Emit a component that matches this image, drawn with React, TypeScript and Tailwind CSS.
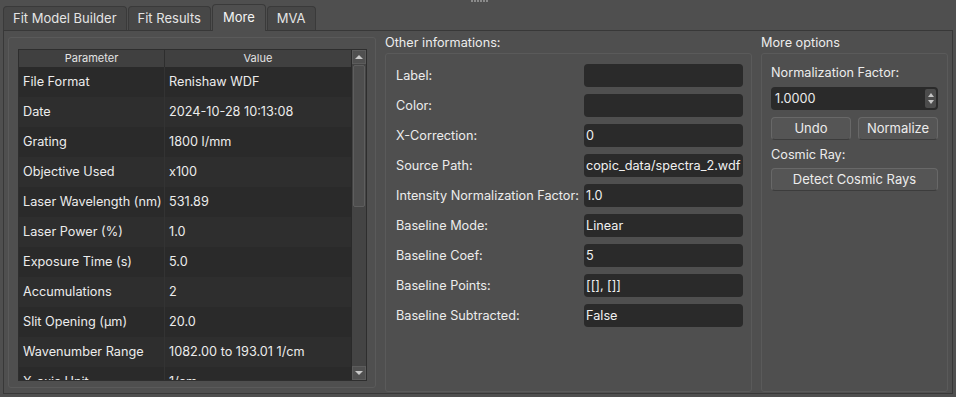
import React from "react";

const rows: [string, string][] = [
  ["File Format", "Renishaw WDF"],
  ["Date", "2024-10-28 10:13:08"],
  ["Grating", "1800 l/mm"],
  ["Objective Used", "x100"],
  ["Laser Wavelength (nm)", "531.89"],
  ["Laser Power (%)", "1.0"],
  ["Exposure Time (s)", "5.0"],
  ["Accumulations", "2"],
  ["Slit Opening (µm)", "20.0"],
  ["Wavenumber Range", "1082.00 to 193.01 1/cm"],
  ["X-axis Unit", "1/cm"],
];

const infos: [string, string][] = [
  ["Label:", ""],
  ["Color:", ""],
  ["X-Correction:", "0"],
  ["Source Path:", "copic_data/spectra_2.wdf"],
  ["Intensity Normalization Factor:", "1.0"],
  ["Baseline Mode:", "Linear"],
  ["Baseline Coef:", "5"],
  ["Baseline Points:", "[[], []]"],
  ["Baseline Subtracted:", "False"],
];

const tabs = ["Fit Model Builder", "Fit Results", "More", "MVA"];

function Button({ children, className = "" }: { children: React.ReactNode; className?: string }) {
  return (
    <div
      className={`flex h-[23px] items-center justify-center rounded-[4px] border border-[#686868] border-b-[#3c3c3c] bg-[#555555] text-[13px] text-[#ececec] ${className}`}
    >
      {children}
    </div>
  );
}

export default function App() {
  return (
    <div
      className="relative h-[397px] w-[956px] overflow-hidden bg-[#4f4f4f] text-[12.7px] text-[#ececec]"
      style={{ fontFamily: "Inter, 'Noto Sans', sans-serif" }}
    >
      {/* splitter handle */}
      <div className="absolute left-[471px] top-0 flex gap-[1px]">
        {[0, 1, 2, 3, 4, 5].map((i) => (
          <div key={i} className="h-[2px] w-[2px] bg-[#8a8a8a]" />
        ))}
      </div>

      {/* tab bar */}
      <div className="flex h-[30px] items-end pl-[3px] pt-[4px] text-[13px]">
        {tabs.map((t) => {
          const active = t === "More";
          return (
            <div
              key={t}
              className={
                active
                  ? "relative z-10 -mb-[1px] mr-[1px] flex h-[27px] items-center rounded-t-[4px] border border-b-0 border-[#3a3a3a] bg-[#4f4f4f] px-[10px] pb-[1px] text-[#f4f4f4]"
                  : "mr-[1px] flex h-[24px] items-center rounded-t-[4px] border border-b-0 border-[#3a3a3a] bg-[#474747] px-[9px] pt-[1px] text-[#e4e4e4]"
              }
            >
              {t}
            </div>
          );
        })}
      </div>

      {/* tab pane */}
      <div className="mx-[3px] flex h-[364px] border border-[#383838] px-[4px] pt-[6px]">
        {/* left group: metadata table */}
        <div className="h-[351px] w-[368px] rounded-[3px] border border-[#5a5a5a] px-[9px] pt-[11px]">
          <div className="flex h-[332px] w-[349px] border border-[#2e2e2e] bg-[#2b2b2b]">
            <div className="flex-1 overflow-hidden">
              <div className="flex h-[17px] bg-[#404040] text-[11px] text-[#e4e4e4]">
                <div className="flex w-[146px] items-center justify-center border-r border-[#2e2e2e]">Parameter</div>
                <div className="flex flex-1 items-center justify-center">Value</div>
              </div>
              {rows.map(([k, v], i) => (
                <div key={k} className={`flex h-[30px] items-center ${i % 2 ? "bg-[#2e2e2e]" : "bg-[#2a2a2a]"}`}>
                  <div className="flex h-full w-[146px] items-center whitespace-nowrap border-r border-[#333333] pl-[4px]">
                    {k}
                  </div>
                  <div className="whitespace-nowrap pl-[4px]">{v}</div>
                </div>
              ))}
            </div>
            {/* scrollbar */}
            <div className="flex w-[15px] flex-col border-l border-[#2a2a2a] bg-[#444444]">
              <div className="flex h-[14px] items-center justify-center border border-[#5c5c5c] bg-[#505050]">
                <div className="h-0 w-0 border-x-[4px] border-b-[4px] border-x-transparent border-b-[#c8c8c8]" />
              </div>
              <div className="mx-[1px] mt-[1px] h-[142px] rounded-[2px] border border-[#5e5e5e] bg-[#4e4e4e]" />
              <div className="flex-1" />
              <div className="flex h-[14px] items-center justify-center border border-[#5c5c5c] bg-[#505050]">
                <div className="h-0 w-0 border-x-[4px] border-t-[4px] border-x-transparent border-t-[#c8c8c8]" />
              </div>
            </div>
          </div>
        </div>

        {/* middle group */}
        <div className="ml-[9px] flex w-[368px] flex-col">
          <div className="h-[16px] leading-[12px]">Other informations:</div>
          <div className="h-[339px] rounded-[3px] border border-[#5a5a5a] pl-[10px] pt-[10px]">
            <div className="flex flex-col gap-[7px]">
              {infos.map(([k, v]) => (
                <div key={k} className="flex h-[23px] items-center">
                  <div className="w-[188px] whitespace-nowrap">{k}</div>
                  <div className="flex h-[23px] w-[159px] items-center justify-end overflow-hidden whitespace-nowrap rounded-[4px] bg-[#2a2a2a] px-[2px] text-[#f0f0f0]">
                    <span className="flex-none">{v}</span>
                    <span className="flex-1" />
                  </div>
                </div>
              ))}
            </div>
          </div>
        </div>

        {/* right group */}
        <div className="ml-[9px] flex w-[187px] flex-col">
          <div className="h-[16px] leading-[12px]">More options</div>
          <div className="h-[339px] rounded-[3px] border border-[#5a5a5a] px-[9px] pt-[11px]">
            <div className="leading-[16px]">Normalization Factor:</div>
            <div className="mt-[6px] flex h-[23px] items-center rounded-[4px] bg-[#2a2a2a] pl-[4px]">
              <span className="flex-1">1.0000</span>
              <div className="mr-[2px] flex h-[19px] w-[11px] flex-col items-center justify-center gap-[3px] rounded-[2px] bg-[#4c4c4c]">
                <div className="h-0 w-0 border-x-[3.5px] border-b-[4px] border-x-transparent border-b-[#c4c4c4]" />
                <div className="h-0 w-0 border-x-[3.5px] border-t-[4px] border-x-transparent border-t-[#c4c4c4]" />
              </div>
            </div>
            <div className="mt-[7px] flex gap-[7px]">
              <Button className="w-[80px]">Undo</Button>
              <Button className="w-[80px]">Normalize</Button>
            </div>
            <div className="mt-[7px] leading-[16px]">Cosmic Ray:</div>
            <Button className="mt-[5px] w-full">Detect Cosmic Rays</Button>
          </div>
        </div>
      </div>
    </div>
  );
}
